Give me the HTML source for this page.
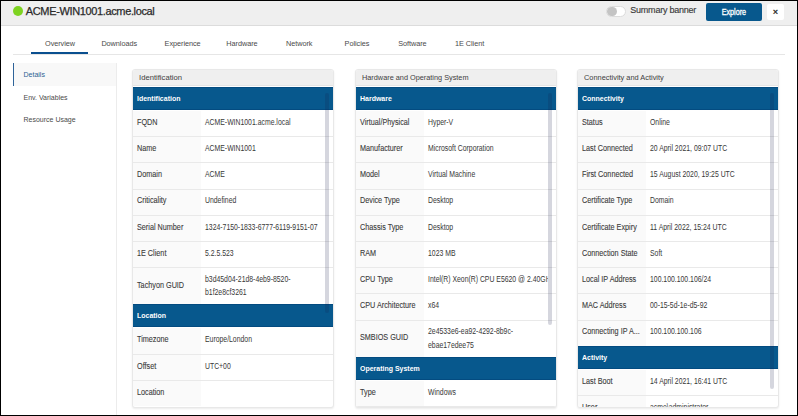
<!DOCTYPE html><html><head><meta charset="utf-8"><style>
*{box-sizing:border-box;margin:0;padding:0}
html,body{width:798px;height:416px;overflow:hidden;background:#fff}
body{position:relative;font-family:"Liberation Sans",sans-serif;color:#444}
.frame{position:absolute;left:0;top:0;width:798px;height:416px;border:1px solid #000;z-index:50;pointer-events:none}
.hdr{position:absolute;left:0;top:0;width:798px;height:26px;background:#efefef;border-bottom:1px solid #dcdcdc}
.dot{position:absolute;left:13px;top:6px;width:10px;height:10px;border-radius:50%;background:#7ed321}
.title{position:absolute;left:25.8px;top:3.8px;font-size:11px;letter-spacing:-0.36px;line-height:14px;color:#2a2a2a;-webkit-text-stroke:0.25px #2a2a2a;white-space:nowrap}
.tog{position:absolute;left:605.5px;top:5.5px;width:20.5px;height:11.5px;border-radius:6px;background:#fff;border:1px solid #dcdcdc}
.tog:after{content:"";position:absolute;left:0.5px;top:0px;width:9.5px;height:9.5px;border-radius:50%;background:#c4c4c4}
.sumb{position:absolute;left:630.3px;top:3.1px;font-size:9px;letter-spacing:-0.23px;line-height:14px;color:#3a3a3a;-webkit-text-stroke:0.15px #3a3a3a;white-space:nowrap}
.exp{position:absolute;left:706px;top:3px;width:56px;height:18px;border-radius:2px;background:#07588d;color:#fff;line-height:14.5px;text-align:center}
.exp span{display:inline-block;font-size:8.2px;transform:scaleX(0.88);-webkit-text-stroke:0.3px #fff}
.cls{position:absolute;left:767px;top:4px;width:17px;height:16px;border-radius:2px;background:#fff;color:#222;font-size:9.2px;line-height:17.5px;text-align:center;-webkit-text-stroke:0.3px #222}
.tabs{position:absolute;left:13px;top:54px;width:772px;height:1px;background:#e6e6e6}
.tab{position:absolute;top:38.5px;font-size:7.3px;line-height:10px;letter-spacing:-0.05px;color:#4a4a4a;white-space:nowrap}
.uline{position:absolute;left:31px;top:52px;width:57px;height:2px;background:#0a4f8f}
.side{position:absolute;left:116px;top:63px;width:1px;height:353px;background:#ececec}
.sel{position:absolute;left:13px;top:63px;width:103px;height:23px;background:#f8f8f8;border-left:1px solid #2e6399}
.si{position:absolute;left:23.5px;font-size:7px;line-height:10px;color:#4a4a4a;white-space:nowrap}
.panel{position:absolute;top:69px;width:202px;height:338px;border:1px solid #e8e8e8;border-radius:3px;box-shadow:0 1px 2px rgba(0,0,0,0.08);overflow:hidden;background:#fff}
.ph{height:16px;background:#efefef;border-bottom:1px solid #e4e4e4;font-size:7.9px;line-height:15.2px;padding-left:6px;color:#404040;white-space:nowrap}
.ph span{display:inline-block;font-size:7.9px;transform:scaleX(0.97);transform-origin:0 50%}
.pb{position:absolute;top:16px;left:0;right:0;bottom:0;overflow:hidden;border-top:1px solid #fff}
.sh{height:23px;background:#07588d;color:#fff;font-weight:bold;font-size:7.8px;line-height:22px;padding-left:3.8px;border-top:1px solid #034b80;border-bottom:1px solid #034b80}
.sh span{display:inline-block;transform:scaleX(0.895);transform-origin:0 50%}
.row{display:flex;height:26.2px;border-top:1px solid #e9e9e9}
.sh+.row{border-top-color:#fff}
.row.two{height:37.3px}
.row.two .val span{line-height:13.6px;transform:translateY(-0.2px) scaleX(0.82)}
.lab{width:68px;flex:none;background:#fafafa;padding-left:3.8px;display:flex;align-items:center;color:#3a3a3a;white-space:nowrap}
.lab span{display:inline-block;font-size:8.4px;line-height:13.4px;transform:translateY(-0.8px) scaleX(0.865);transform-origin:0 50%;-webkit-text-stroke:0.1px #3a3a3a}
.val{flex:1;padding-left:3.5px;margin-right:8px;display:flex;align-items:center;color:#383838;white-space:nowrap;overflow:hidden}
.val span{display:inline-block;font-size:8.4px;line-height:13.4px;transform:translateY(-0.8px) scaleX(0.82);transform-origin:0 50%}
.sb{position:absolute;left:191.6px;width:4.2px;background:rgba(20,30,70,0.18);border-radius:2px;z-index:5}
</style></head><body>
<div class="hdr"><div class="dot"></div><div class="title">ACME-WIN1001.acme.local</div><div class="tog"></div><div class="sumb">Summary banner</div><div class="exp"><span>Explore</span></div><div class="cls">&#215;</div></div>
<div class="tab" style="left:45px">Overview</div>
<div class="tab" style="left:101.4px">Downloads</div>
<div class="tab" style="left:164.6px">Experience</div>
<div class="tab" style="left:226.3px">Hardware</div>
<div class="tab" style="left:286px">Network</div>
<div class="tab" style="left:344.6px">Policies</div>
<div class="tab" style="left:398.2px">Software</div>
<div class="tab" style="left:455px">1E Client</div>
<div class="tabs"></div><div class="uline"></div>
<div class="sel"></div><div class="side"></div>
<div class="si" style="top:70px;color:#2d5f93">Details</div><div class="si" style="top:92.5px">Env. Variables</div><div class="si" style="top:115px">Resource Usage</div>
<div class="panel" style="left:132px;height:338.8px">
<div class="ph"><span style="transform:scaleX(0.97)">Identification</span></div>
<div class="pb">
<div class="sh"><span>Identification</span></div>
<div class="row"><div class="lab"><span>FQDN</span></div><div class="val"><span>ACME-WIN1001.acme.local</span></div></div>
<div class="row"><div class="lab"><span>Name</span></div><div class="val"><span>ACME-WIN1001</span></div></div>
<div class="row"><div class="lab"><span>Domain</span></div><div class="val"><span>ACME</span></div></div>
<div class="row"><div class="lab"><span>Criticality</span></div><div class="val"><span>Undefined</span></div></div>
<div class="row"><div class="lab"><span>Serial Number</span></div><div class="val"><span>1324-7150-1833-6777-6119-9151-07</span></div></div>
<div class="row"><div class="lab"><span>1E Client</span></div><div class="val"><span>5.2.5.523</span></div></div>
<div class="row two"><div class="lab"><span>Tachyon GUID</span></div><div class="val"><span>b3d45d04-21d8-4eb9-8520-<br>b1f2e8cf3261</span></div></div>
<div class="sh"><span>Location</span></div>
<div class="row"><div class="lab"><span>Timezone</span></div><div class="val"><span>Europe/London</span></div></div>
<div class="row"><div class="lab"><span>Offset</span></div><div class="val"><span>UTC+00</span></div></div>
<div class="row"><div class="lab"><span>Location</span></div><div class="val"><span></span></div></div>
</div>
<div class="sb" style="top:23px;height:220px"></div>
</div>
<div class="panel" style="left:355px;height:338.8px">
<div class="ph"><span style="transform:scaleX(0.927)">Hardware and Operating System</span></div>
<div class="pb">
<div class="sh"><span>Hardware</span></div>
<div class="row"><div class="lab"><span>Virtual/Physical</span></div><div class="val"><span>Hyper-V</span></div></div>
<div class="row"><div class="lab"><span>Manufacturer</span></div><div class="val"><span>Microsoft Corporation</span></div></div>
<div class="row"><div class="lab"><span>Model</span></div><div class="val"><span>Virtual Machine</span></div></div>
<div class="row"><div class="lab"><span>Device Type</span></div><div class="val"><span>Desktop</span></div></div>
<div class="row"><div class="lab"><span>Chassis Type</span></div><div class="val"><span>Desktop</span></div></div>
<div class="row"><div class="lab"><span>RAM</span></div><div class="val"><span>1023 MB</span></div></div>
<div class="row"><div class="lab"><span>CPU Type</span></div><div class="val"><span>Intel(R) Xeon(R) CPU E5620 @ 2.40GHz</span></div></div>
<div class="row"><div class="lab"><span>CPU Architecture</span></div><div class="val"><span>x64</span></div></div>
<div class="row two"><div class="lab"><span>SMBIOS GUID</span></div><div class="val"><span>2e4533e6-ea92-4292-8b9c-<br>ebae17edee75</span></div></div>
<div class="sh"><span>Operating System</span></div>
<div class="row"><div class="lab"><span>Type</span></div><div class="val"><span>Windows</span></div></div>
<div class="row"><div class="lab"><span>Version</span></div><div class="val"><span>10.0.17763</span></div></div>
</div>
<div class="sb" style="top:23px;height:232px"></div>
</div>
<div class="panel" style="left:577px;height:338.8px">
<div class="ph"><span style="transform:scaleX(0.937)">Connectivity and Activity</span></div>
<div class="pb">
<div class="sh"><span>Connectivity</span></div>
<div class="row"><div class="lab"><span>Status</span></div><div class="val"><span>Online</span></div></div>
<div class="row"><div class="lab"><span>Last Connected</span></div><div class="val"><span>20 April 2021, 09:07 UTC</span></div></div>
<div class="row"><div class="lab"><span>First Connected</span></div><div class="val"><span>15 August 2020, 19:25 UTC</span></div></div>
<div class="row"><div class="lab"><span>Certificate Type</span></div><div class="val"><span>Domain</span></div></div>
<div class="row"><div class="lab"><span>Certificate Expiry</span></div><div class="val"><span>11 April 2022, 15:24 UTC</span></div></div>
<div class="row"><div class="lab"><span>Connection State</span></div><div class="val"><span>Soft</span></div></div>
<div class="row"><div class="lab"><span>Local IP Address</span></div><div class="val"><span>100.100.100.106/24</span></div></div>
<div class="row"><div class="lab"><span>MAC Address</span></div><div class="val"><span>00-15-5d-1e-d5-92</span></div></div>
<div class="row"><div class="lab"><span>Connecting IP A...</span></div><div class="val"><span>100.100.100.106</span></div></div>
<div class="sh"><span>Activity</span></div>
<div class="row"><div class="lab"><span>Last Boot</span></div><div class="val"><span>14 April 2021, 16:41 UTC</span></div></div>
<div class="row"><div class="lab"><span>User</span></div><div class="val"><span>acme\administrator</span></div></div>
</div>
<div class="sb" style="top:23px;height:296px"></div>
</div>
<div class="frame"></div>
</body></html>
